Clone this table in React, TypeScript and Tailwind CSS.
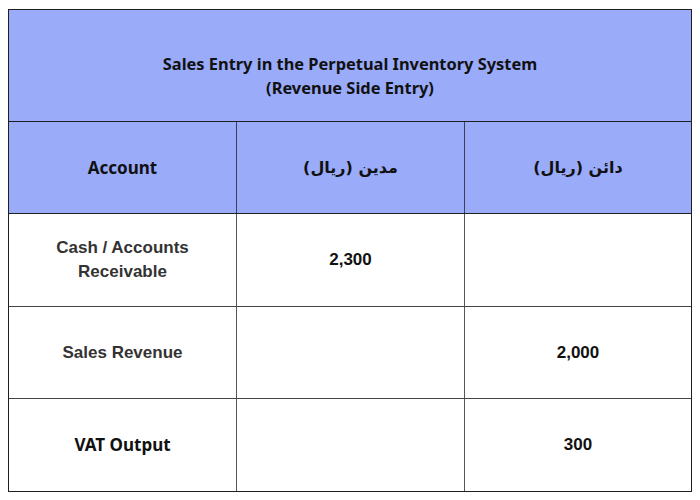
const rows = [
  { account: ["Cash / Accounts", "Receivable"], debit: "2,300", credit: "" },
  { account: ["Sales Revenue"], debit: "", credit: "2,000" },
  { account: ["VAT Output"], debit: "", credit: "300" },
];

const rowHeights = ["h-[93px]", "h-[92px]", "h-[92px]"];

export default function App() {
  return (
    <div className="w-[700px] h-[500px] bg-white pl-[8px] pt-[9px]">
      <div className="w-[684px] border border-[#1f1f1f] flex flex-col">
        <div className="h-[112px] pt-[20px] bg-[#9aabfa] border-b border-[#1f1f1f] flex flex-col items-center justify-center text-[16.4px] leading-[24px] font-bold text-[#111] font-['Noto_Sans',sans-serif]">
          <div>Sales Entry in the Perpetual Inventory System</div>
          <div>(Revenue Side Entry)</div>
        </div>
        <div className="h-[92px] bg-[#9aabfa] border-b border-[#1f1f1f] grid grid-cols-[228px_228px_226px] text-[17px] font-bold text-[#111]">
          <div className="border-r border-[#3a3f5a] flex items-center justify-center font-['Noto_Sans',sans-serif]">Account</div>
          <div dir="rtl" className="border-r border-[#3a3f5a] flex items-center justify-center font-['DejaVu_Sans',sans-serif] text-[16px]">مدين (ريال)</div>
          <div dir="rtl" className="flex items-center justify-center font-['DejaVu_Sans',sans-serif] text-[16px]">دائن (ريال)</div>
        </div>
        {rows.map((r, i) => (
          <div
            key={i}
            className={`${rowHeights[i]} ${i < rows.length - 1 ? "border-b border-[#444]" : ""} grid grid-cols-[228px_228px_226px] text-[17px] leading-[24px] font-bold font-['Liberation_Sans',Arial,sans-serif] text-[#333]`}
          >
            <div className={`border-r border-[#555] flex flex-col items-center justify-center text-center ${i === 2 ? "text-[#111] font-['Noto_Sans',sans-serif]" : ""}`}>
              {r.account.map((l) => (
                <div key={l}>{l}</div>
              ))}
            </div>
            <div className="border-r border-[#555] flex items-center justify-center text-[#111]">{r.debit}</div>
            <div className="flex items-center justify-center text-[#111]">{r.credit}</div>
          </div>
        ))}
      </div>
    </div>
  );
}
